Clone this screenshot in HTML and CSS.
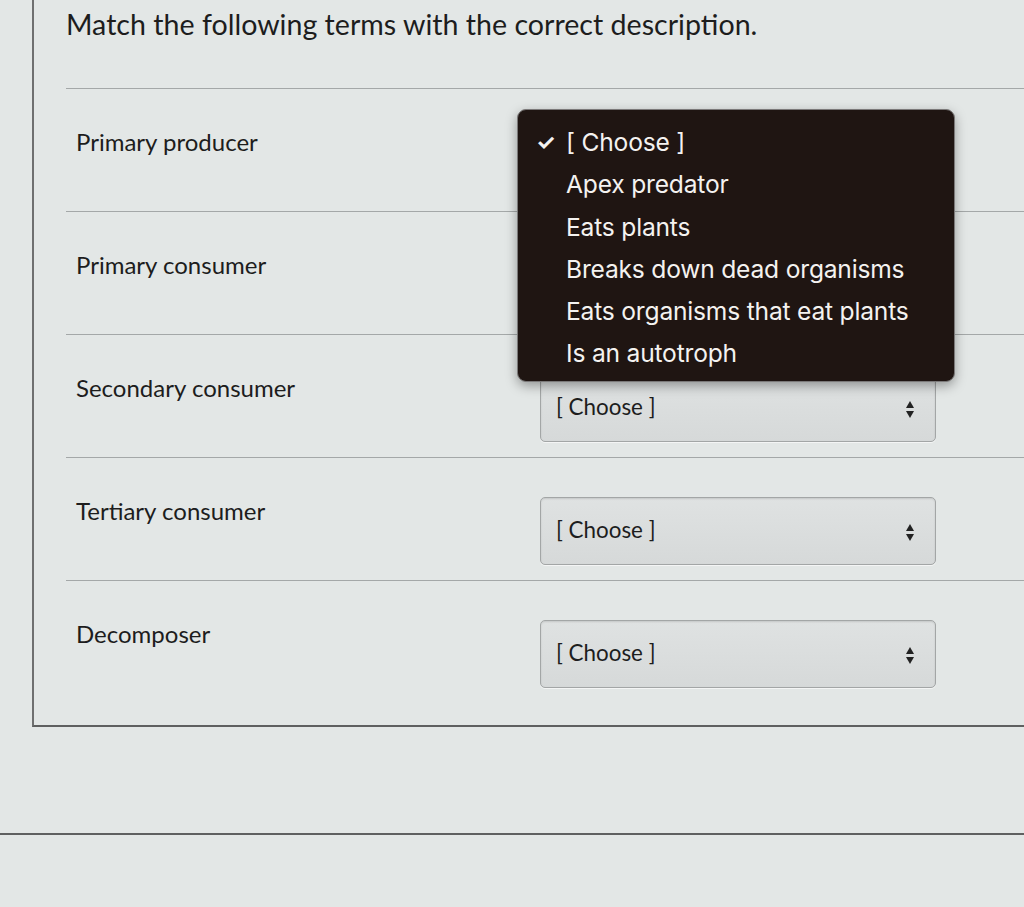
FILE: index.html
```html
<!DOCTYPE html>
<html lang="en">
<head>
<meta charset="utf-8">
<title>Matching question</title>
<link rel="stylesheet" href="styles.css">
</head>
<body>
<div class="page">
  <section class="question">
    <h1 class="question-title">Match the following terms with the correct description.</h1>
    <div class="answers">
      <div class="answer-row">
        <div class="term">Primary producer</div>
        <div class="select-cell">
          <div class="select covered"><span>[ Choose ]</span><span class="arrows"><i class="up"></i><i class="down"></i></span></div>
        </div>
      </div>
      <div class="answer-row">
        <div class="term">Primary consumer</div>
        <div class="select-cell">
          <div class="select covered"><span>[ Choose ]</span><span class="arrows"><i class="up"></i><i class="down"></i></span></div>
        </div>
      </div>
      <div class="answer-row">
        <div class="term">Secondary consumer</div>
        <div class="select-cell">
          <div class="select"><span>[ Choose ]</span><span class="arrows"><i class="up"></i><i class="down"></i></span></div>
        </div>
      </div>
      <div class="answer-row">
        <div class="term">Tertiary consumer</div>
        <div class="select-cell">
          <div class="select"><span>[ Choose ]</span><span class="arrows"><i class="up"></i><i class="down"></i></span></div>
        </div>
      </div>
      <div class="answer-row last">
        <div class="term">Decomposer</div>
        <div class="select-cell">
          <div class="select"><span>[ Choose ]</span><span class="arrows"><i class="up"></i><i class="down"></i></span></div>
        </div>
      </div>

      <ul class="menu">
        <li class="selected"><span class="check">✓</span>[ Choose ]</li>
        <li>Apex predator</li>
        <li>Eats plants</li>
        <li>Breaks down dead organisms</li>
        <li>Eats organisms that eat plants</li>
        <li>Is an autotroph</li>
      </ul>
    </div>
  </section>
  <div class="next-section"></div>
</div>
</body>
</html>
```
FILE: styles.css
```css
* { box-sizing: border-box; }

html, body {
  margin: 0;
  padding: 0;
}

body {
  background: #e3e7e6;
  font-family: Lato, "Open Sans", sans-serif;
  color: #1d1d1d;
  width: 1024px;
  height: 907px;
  overflow: hidden;
}

.page {
  display: flex;
  flex-direction: column;
}

.question {
  margin-left: 32px;
  height: 727px;
  border-left: 2px solid #6f7070;
  border-bottom: 2px solid #5f6060;
  padding-left: 32px;
}

.question-title {
  margin: 0;
  padding-top: 5px;
  height: 88px;
  font-size: 28.6px;
  font-weight: 400;
  line-height: 38px;
}

.answers {
  position: relative;
  border-top: 1px solid #a4a8a8;
}

.answer-row {
  display: grid;
  grid-template-columns: 474px 396px;
  height: 123px;
  border-bottom: 1px solid #a4a8a8;
}

.answer-row.last {
  border-bottom: none;
}

.term {
  padding-left: 10px;
  padding-top: 37px;
  font-size: 24px;
  line-height: 32px;
}

.select-cell {
  padding-top: 39px;
}

.select {
  height: 68px;
  display: flex;
  align-items: center;
  justify-content: space-between;
  padding: 0 21px 3px 15px;
  font-size: 22.4px;
  border: 1px solid #a3a6a6;
  border-radius: 5px;
  background: linear-gradient(#dfe2e2, #d6d9d9);
  box-shadow: inset 0 1px 2px rgba(0, 0, 0, 0.12), 0 1px 0 rgba(255, 255, 255, 0.6);
}

/* the two selects hidden under the open list */
.select.covered {
  visibility: hidden;
}

.arrows {
  display: flex;
  flex-direction: column;
  gap: 3px;
  margin-top: 6px;
}

.arrows i {
  display: block;
  width: 0;
  height: 0;
  border-left: 4.5px solid transparent;
  border-right: 4.5px solid transparent;
}

.arrows .up { border-bottom: 7px solid #222; }
.arrows .down { border-top: 7px solid #222; }

/* open dropdown list of the first select */
.menu {
  position: absolute;
  left: 451px;
  top: 20px;
  width: 438px;
  height: 273px;
  margin: 0;
  padding: 11px 0 0 0;
  list-style: none;
  background: #1f1512;
  border: 1px solid #7b7979;
  border-radius: 9px;
  box-shadow: 0 4px 12px rgba(0, 0, 0, 0.35);
  font-family: Inter, "Open Sans", sans-serif;
  font-size: 24.6px;
  letter-spacing: -0.2px;
  color: #f4f2f0;
}

.menu li {
  height: 42.3px;
  line-height: 42px;
  padding-left: 48px;
  position: relative;
  white-space: nowrap;
}

.menu .check {
  position: absolute;
  left: 18px;
  font-size: 22px;
  font-weight: 700;
}

.next-section {
  margin-top: 106px;
  border-top: 2px solid #5f6060;
}
```
